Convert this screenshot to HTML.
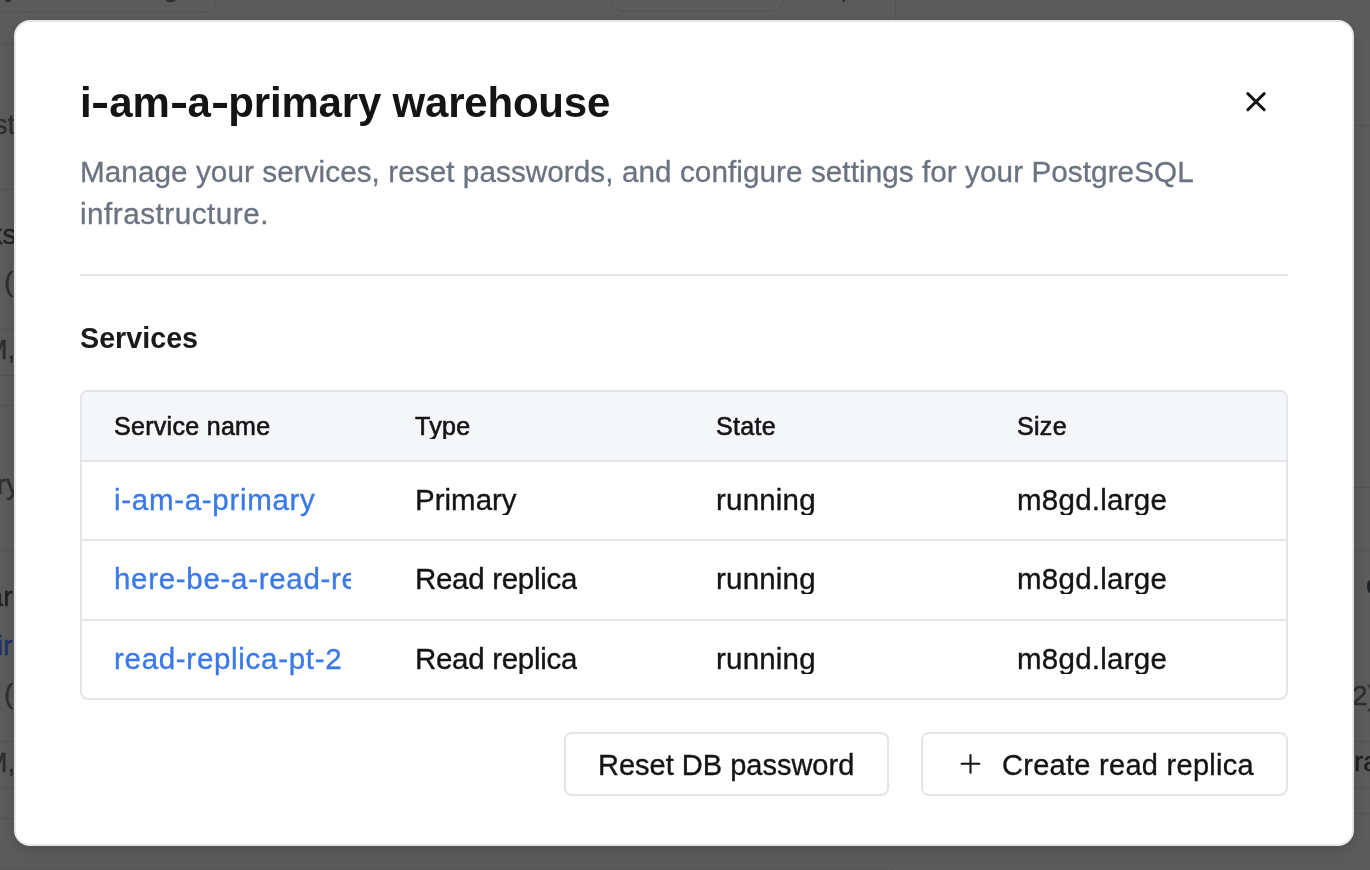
<!DOCTYPE html>
<html>
<head>
<meta charset="utf-8">
<style>
*{box-sizing:border-box;margin:0;padding:0}
html,body{width:1370px;height:870px;overflow:hidden}
body{position:relative;transform:translateZ(0);background:#5b5b5b;font-family:"Liberation Sans",sans-serif;color:#141414}
.abs{position:absolute;white-space:nowrap;line-height:1}
.bgline{position:absolute;height:1px;background:#535353}
.bgtxt{position:absolute;white-space:nowrap;line-height:1;color:#2e2f31;font-size:30px;-webkit-text-stroke-width:0.4px}
#modal{position:absolute;left:14px;top:20px;width:1340px;height:826px;background:#fff;border:2px solid #e6e7ea;border-radius:16px;box-shadow:0 6px 14px rgba(0,0,0,0.12)}
.title{left:80px;top:81.5px;font-size:42px;font-weight:bold;color:#141416;letter-spacing:-0.2px}
.hy{display:inline-block;transform:scaleX(1.3);margin:0 2px}
.sub{position:absolute;left:80px;top:150.7px;width:1180px;font-size:29.7px;line-height:42px;color:#6b7280;white-space:normal;-webkit-text-stroke:0.3px #6b7280}
.divider{position:absolute;left:80px;top:274px;width:1208px;height:2px;background:#e4e5e8}
.services{left:80px;top:323.5px;font-size:28.7px;font-weight:bold;color:#1a1a1c}
#table{position:absolute;left:80px;top:390px;width:1208px;height:310px;border:2px solid #e4e5e8;border-radius:8px;overflow:hidden}
.thead{position:absolute;left:0;top:0;width:1204px;height:70px;background:#f5f6f9;border-bottom:2px solid #e4e5e8}
.rowb{position:absolute;left:0;width:1204px;height:2px;background:#e4e5e8}
.cell{position:absolute;white-space:nowrap;line-height:1;overflow:hidden}
.th{font-size:25px;letter-spacing:0.3px;color:#141414;-webkit-text-stroke:0.6px #141414}
.td{font-size:29.5px;color:#141414;-webkit-text-stroke:0.35px #141414}
.link{color:#3a79e8;letter-spacing:0.7px;-webkit-text-stroke:0.35px #3a79e8}
.btn{position:absolute;top:732px;height:64px;border:2px solid #e4e5e8;border-radius:8px;background:#fff}
.btxt{font-size:29px;color:#141414;-webkit-text-stroke:0.35px #141414}
</style>
</head>
<body>
<!-- background page hints -->
<div style="position:absolute;left:-30px;top:-30px;width:246px;height:43px;border:1.5px solid #535353;border-radius:12px"></div>
<div style="position:absolute;left:610px;top:-30px;width:174px;height:42px;border:1.5px solid #535353;border-radius:14px"></div>
<div style="position:absolute;left:895px;top:0;width:1px;height:20px;background:#535353"></div>
<div class="bgline" style="left:0;top:43px;width:16px"></div>
<div class="bgline" style="left:0;top:189px;width:16px"></div>
<div class="bgline" style="left:0;top:329px;width:16px"></div>
<div class="bgline" style="left:0;top:375px;width:16px"></div>
<div class="bgline" style="left:0;top:405px;width:16px"></div>
<div class="bgline" style="left:0;top:550px;width:16px"></div>
<div class="bgline" style="left:0;top:741px;width:16px"></div>
<div class="bgline" style="left:0;top:787px;width:16px"></div>
<div class="bgline" style="left:0;top:818px;width:16px"></div>
<div class="bgline" style="left:1352px;top:125px;width:18px"></div>
<div class="bgline" style="left:1352px;top:487px;width:18px"></div>
<div class="bgline" style="left:1352px;top:550px;width:18px"></div>
<div class="bgline" style="left:1352px;top:741px;width:18px"></div>
<div class="bgline" style="left:1352px;top:787px;width:18px"></div>
<div class="bgline" style="left:1352px;top:813px;width:18px"></div>
<div class="bgtxt" style="left:-6.5px;top:111.3px;color:#2e2f31;font-size:28px;font-weight:normal">st</div>
<div class="bgtxt" style="left:-11.4px;top:221.3px;color:#1f2022;font-size:28px;font-weight:normal">ks</div>
<div class="bgtxt" style="left:4px;top:268.3px;color:#2e2f31;font-size:28px;font-weight:normal">(</div>
<div class="bgtxt" style="left:-15.8px;top:336.3px;color:#2e2f31;font-size:28px;font-weight:normal">M,</div>
<div class="bgtxt" style="left:-3.3px;top:471.3px;color:#2e2f31;font-size:28px;font-weight:normal">ry</div>
<div class="bgtxt" style="left:-12.4px;top:583.3px;color:#1f2022;font-size:28px;font-weight:normal">ar</div>
<div class="bgtxt" style="left:-3px;top:632.3px;color:#1e3466;font-size:28px;font-weight:normal">ir</div>
<div class="bgtxt" style="left:4px;top:680.3px;color:#2e2f31;font-size:28px;font-weight:normal">(</div>
<div class="bgtxt" style="left:-15.8px;top:749.3px;color:#2e2f31;font-size:28px;font-weight:normal">M,</div>
<div class="bgtxt" style="left:1366px;top:571.3px;color:#1f2022;font-size:28px;font-weight:normal">o</div>
<div class="bgtxt" style="left:1352px;top:682.3px;color:#2e2f31;font-size:28px;font-weight:normal">2)</div>
<div class="bgtxt" style="left:1354px;top:748.3px;color:#1f2022;font-size:28px;font-weight:normal">ra</div>

<div class="bgtxt" style="left:5px;top:-26.7px;color:#2e2f31;font-size:28px">y</div>
<div class="bgtxt" style="left:163px;top:-26.7px;color:#2e2f31;font-size:28px">g</div>
<div class="bgtxt" style="left:840px;top:-25px;color:#1f2022;font-size:28px">,</div>
<div style="position:absolute;left:-30px;top:866.5px;width:925px;height:40px;border:1.5px solid #535353;border-radius:8px"></div>
<div id="modal"></div>
<div class="abs title">i<span class="hy">-</span>am<span class="hy">-</span>a<span class="hy">-</span>primary warehouse</div>
<svg style="position:absolute;left:1240px;top:86px" width="32" height="32" viewBox="0 0 32 32">
  <path d="M7.8 7.6 L24.2 23.8 M24.2 7.6 L7.8 23.8" stroke="#111" stroke-width="2.9" stroke-linecap="round" fill="none"/>
</svg>
<div class="sub"><span style="letter-spacing:0.06px">Manage your services, reset passwords, and configure settings for your PostgreSQL</span><br><span style="letter-spacing:0.5px">infrastructure.</span></div>
<div class="divider"></div>
<div class="abs services">Services</div>

<div id="table">
  <div class="thead"></div>
  <div class="rowb" style="top:147px"></div>
  <div class="rowb" style="top:227px"></div>
</div>
<!-- header -->
<div class="cell th" style="left:114px;top:414px">Service name</div>
<div class="cell th" style="left:415px;top:414px">Type</div>
<div class="cell th" style="left:716px;top:414px">State</div>
<div class="cell th" style="left:1017px;top:414px">Size</div>
<!-- row1 -->
<div class="cell td link" style="left:114px;top:485px;width:237px;height:34px">i-am-a-primary</div>
<div class="cell td" style="left:415px;top:485px">Primary</div>
<div class="cell td" style="left:716px;top:485px;letter-spacing:0.2px">running</div>
<div class="cell td" style="left:1017px;top:485px;letter-spacing:0.25px">m8gd.large</div>
<!-- row2 -->
<div class="cell td link" style="left:114px;top:564px;width:237px;height:34px">here-be-a-read-replica</div>
<div class="cell td" style="left:415px;top:564px;letter-spacing:-0.3px">Read replica</div>
<div class="cell td" style="left:716px;top:564px;letter-spacing:0.2px">running</div>
<div class="cell td" style="left:1017px;top:564px;letter-spacing:0.25px">m8gd.large</div>
<!-- row3 -->
<div class="cell td link" style="left:114px;top:644px;width:237px;height:34px">read-replica-pt-2</div>
<div class="cell td" style="left:415px;top:644px;letter-spacing:-0.3px">Read replica</div>
<div class="cell td" style="left:716px;top:644px;letter-spacing:0.2px">running</div>
<div class="cell td" style="left:1017px;top:644px;letter-spacing:0.25px">m8gd.large</div>

<div class="btn" style="left:564px;width:325px"></div>
<div class="abs btxt" style="left:598px;top:750.5px">Reset DB password</div>
<div class="btn" style="left:921px;width:367px"></div>
<svg style="position:absolute;left:958px;top:752px" width="25" height="25" viewBox="0 0 25 25">
  <path d="M12.5 3 V20.8 M3.6 11.7 H21.4" stroke="#141414" stroke-width="2.1" stroke-linecap="round" fill="none"/>
</svg>
<div class="abs btxt" style="left:1002px;top:750.5px;letter-spacing:0.28px">Create read replica</div>
</body>
</html>
